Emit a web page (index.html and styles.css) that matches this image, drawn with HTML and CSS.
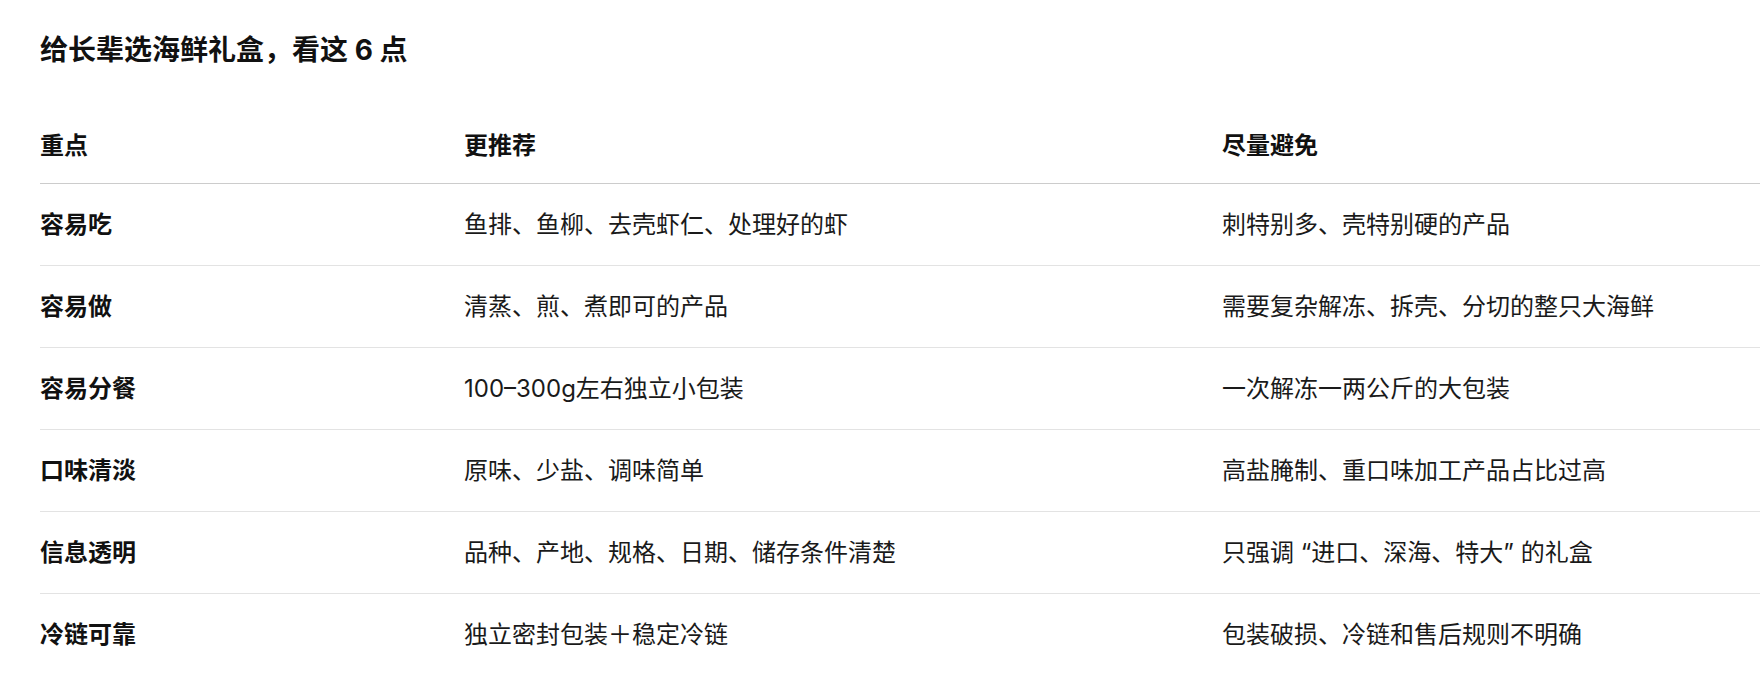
FILE: index.html
```html
<!DOCTYPE html>
<html lang="zh-CN">
<head>
<meta charset="utf-8">
<title>给长辈选海鲜礼盒，看这 6 点</title>
<link rel="stylesheet" href="styles.css">
</head>
<body>
<main class="page">
  <h2 class="title">给长辈选海鲜礼盒，看这 6 点</h2>
  <table class="guide">
    <colgroup>
      <col class="c-key">
      <col class="c-good">
      <col class="c-bad">
    </colgroup>
    <thead>
      <tr><th>重点</th><th>更推荐</th><th>尽量避免</th></tr>
    </thead>
    <tbody>
      <tr><td class="key">容易吃</td><td>鱼排、鱼柳、去壳虾仁、处理好的虾</td><td>刺特别多、壳特别硬的产品</td></tr>
      <tr><td class="key">容易做</td><td>清蒸、煎、煮即可的产品</td><td>需要复杂解冻、拆壳、分切的整只大海鲜</td></tr>
      <tr><td class="key">容易分餐</td><td>100–300g左右独立小包装</td><td>一次解冻一两公斤的大包装</td></tr>
      <tr><td class="key">口味清淡</td><td>原味、少盐、调味简单</td><td>高盐腌制、重口味加工产品占比过高</td></tr>
      <tr><td class="key">信息透明</td><td>品种、产地、规格、日期、储存条件清楚</td><td>只强调 “进口、深海、特大” 的礼盒</td></tr>
      <tr><td class="key">冷链可靠</td><td>独立密封包装＋稳定冷链</td><td>包装破损、冷链和售后规则不明确</td></tr>
    </tbody>
  </table>
</main>
</body>
</html>
```

FILE: styles.css
```css
html, body {
  margin: 0;
  padding: 0;
  background: #ffffff;
}

body {
  font-family: "Inter", "Noto Sans CJK SC", "Noto Sans", sans-serif;
  color: #1a1a1a;
  overflow: hidden;
}

.page {
  padding: 30px 0 0 40px;
}

.title {
  margin: 0 0 30px;
  font-size: 28px;
  line-height: 40px;
  font-weight: 700;
  color: #111111;
}

.guide {
  width: 1720px;
  border-collapse: collapse;
  table-layout: fixed;
}

.c-key { width: 424px; }
.c-good { width: 758px; }

.guide th {
  text-align: left;
  font-size: 24px;
  line-height: 36px;
  font-weight: 600;
  color: #111111;
  padding: 28px 0 19px;
  border-bottom: 1px solid #cccccc;
}

.guide td {
  font-size: 24px;
  line-height: 36px;
  font-weight: 400;
  padding: 23px 0 22px;
  border-bottom: 1px solid #e3e3e3;
  white-space: nowrap;
}

.guide td.key {
  font-weight: 600;
  color: #111111;
}

.guide tbody tr:last-child td {
  border-bottom: none;
}
```
